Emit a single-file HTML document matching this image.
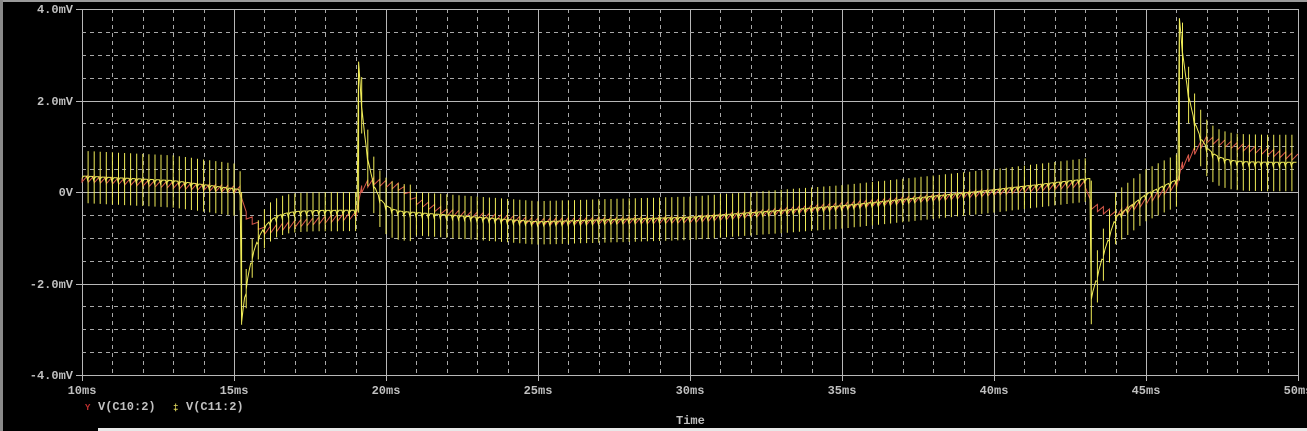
<!DOCTYPE html>
<html><head><meta charset="utf-8"><style>
html,body{margin:0;padding:0;background:#000;width:1307px;height:431px;overflow:hidden}
svg{display:block}
text{font-family:"Liberation Mono","DejaVu Sans Mono",monospace;font-size:12px;font-weight:bold;fill:#c0c0c0}
</style></head><body>
<svg id="s" width="1307" height="431" xmlns="http://www.w3.org/2000/svg" shape-rendering="crispEdges">
<rect x="0" y="0" width="1307" height="431" fill="#000"/>
<rect x="0" y="0" width="1307" height="2" fill="#9a9a9a"/>
<rect x="0" y="0" width="3" height="431" fill="#8a8a8a"/>
<rect x="98" y="428" width="1209" height="3" fill="#e8e8e8"/>
<g id="grid"></g>
<path id="red" fill="none" stroke="#d8584a" stroke-width="1" shape-rendering="auto"/>
<path id="yel" fill="none" stroke="#f0ec58" stroke-width="1" shape-rendering="auto"/>
<text x="73" y="13" text-anchor="end">4.0mV</text>
<text x="73" y="105" text-anchor="end">2.0mV</text>
<text x="73" y="196" text-anchor="end">0V</text>
<text x="73" y="288" text-anchor="end">-2.0mV</text>
<text x="73" y="379" text-anchor="end">-4.0mV</text>
<g id="xl"></g>
<text x="85" y="410" style="fill:#c03030;font-size:9px">Y</text>
<text x="98" y="410">V(C10:2)</text>
<text x="173" y="410" style="fill:#e8e060;font-size:9px">‡</text>
<text x="186" y="410">V(C11:2)</text>
<text x="676" y="424">Time</text>
</svg>
<script>
var X0=82,X1=1298,Y0=9,Y1=375;
var g=document.getElementById('grid'),h='';
var W=X1-X0,H=Y1-Y0;
for(var i=0;i<=40;i++){var x=Math.round(X0+W*i/40)+0.5;var maj=i%5==0;
h+='<line x1="'+x+'" y1="'+Y0+'" x2="'+x+'" y2="'+Y1+'" stroke="'+(maj?'#b8b8b8':'#a8a8a8')+'" stroke-width="1" '+(maj?'':'stroke-dasharray="4,4"')+'/>';}
for(var j=0;j<=16;j++){var y=Math.round(Y0+H*j/16)+0.5;var maj=j%4==0;
h+='<line x1="'+X0+'" y1="'+y+'" x2="'+X1+'" y2="'+y+'" stroke="'+(maj?'#b8b8b8':'#a8a8a8')+'" stroke-width="1" '+(maj?'':'stroke-dasharray="4,4"')+'/>';}
for(var j=0;j<=4;j++){var y=Math.round(Y0+H*j/4)+0.5;h+='<line x1="76" y1="'+y+'" x2="82" y2="'+y+'" stroke="#b8b8b8"/>';}
for(var i=0;i<=8;i++){var x=Math.round(X0+W*i/8)+0.5;h+='<line x1="'+x+'" y1="'+Y1+'" x2="'+x+'" y2="'+(Y1+6)+'" stroke="#b8b8b8"/>';}
g.innerHTML=h;
var xl='';for(var i=0;i<=8;i++){var x=X0+W*i/8;xl+='<text x="'+x+'" y="394" text-anchor="middle">'+(10+5*i)+'ms</text>';}
document.getElementById('xl').innerHTML=xl;
function px(t){return X0+(t-10)/40*W}
function py(v){return 192-v*45.75}
function lerp(k,t){for(var i=0;i<k.length-1;i++){if(t>=k[i][0]&&t<=k[i+1][0]){var f=(t-k[i][0])/(k[i+1][0]-k[i][0]);return k[i][1]+f*(k[i+1][1]-k[i][1]);}}return k[k.length-1][1];}
function ex(t,t0,v0,v1,tau){return v1+(v0-v1)*Math.exp(-(t-t0)/tau)}
function ym(t){
 if(t<15.25) return lerp([[10,0.3],[13,0.2],[15.25,0.0]],t);
 if(t<19.1) return ex(t,15.25,-2.9,-0.45,0.4);
 if(t<43.2){ if(t<21) return ex(t,19.1,2.8,-0.5,0.3);
   return lerp([[21,-0.5],[25,-0.7],[30,-0.6],[35,-0.35],[40,0],[43.2,0.25]],t);}
 if(t<46.1) return lerp([[43.2,-2.35],[43.6,-1.4],[44,-0.6],[45,-0.1],[46.1,0.25]],t);
 return ex(t,46.1,3.75,0.6,0.4);
}
function rm(t){
 if(t<15.2) return lerp([[10,0.3],[15.2,0.05]],t);
 if(t<19.1) return lerp([[15.2,-0.4],[16,-0.85],[17,-0.7],[19.1,-0.5]],t);
 if(t<43.2) return lerp([[19.1,0.0],[19.5,0.25],[20.5,0.1],[21,-0.2],[22,-0.45],[25,-0.65],[30,-0.6],[35,-0.3],[40,0],[43.2,0.2]],t);
 if(t<46.1) return lerp([[43.2,-0.3],[44,-0.5],[45,-0.2],[46.1,0.2]],t);
 return lerp([[46.1,0.5],[46.6,0.9],[47,1.15],[48,1.0],[50,0.75]],t);
}
function amp(t){
 if(t<15.2) return 0.6; if(t<19.1) return 0.45; if(t<21) return 0.65;
 if(t<43.2) return 0.5; if(t<46.1) return 0.6; return 0.65;}
var d='',dt=0.2,t,k;
d='M'+px(10).toFixed(1)+','+py(ym(10)).toFixed(1);
for(k=0;k<=200;k++){
 t=10+k*dt;
 for(var s=1;s<=4;s++){var tt=t+dt*s/4;if(tt>50)break;d+=' L'+px(tt).toFixed(1)+','+py(ym(tt)+(s==4?-0.08:0.05)).toFixed(1);}
 var x2=px(t+dt);if(t+dt>50)break;var m=ym(t+dt),a=amp(t+dt);
 d+=' M'+x2.toFixed(1)+','+py(m+a).toFixed(1)+' L'+x2.toFixed(1)+','+py(m-a*0.9).toFixed(1)+' M'+x2.toFixed(1)+','+py(m).toFixed(1);
}
/* discontinuity jumps */
[[15.25,0.0,-2.9],[19.1,-0.45,2.8],[43.2,0.25,-2.35],[46.1,0.25,3.75]].forEach(function(j){
 var x=px(j[0]).toFixed(1);d+=' M'+x+','+py(j[1]).toFixed(1)+' L'+x+','+py(j[2]).toFixed(1);});
document.getElementById('yel').setAttribute('d',d);
var r='M'+px(10)+','+py(rm(10));
for(t=10;t<50;t+=dt){
 r+=' L'+px(t).toFixed(1)+','+py(rm(t)-0.08).toFixed(1)+' L'+px(t+dt).toFixed(1)+','+py(rm(t+dt)+0.08).toFixed(1);
}
document.getElementById('red').setAttribute('d',r);
</script>
</body></html>
